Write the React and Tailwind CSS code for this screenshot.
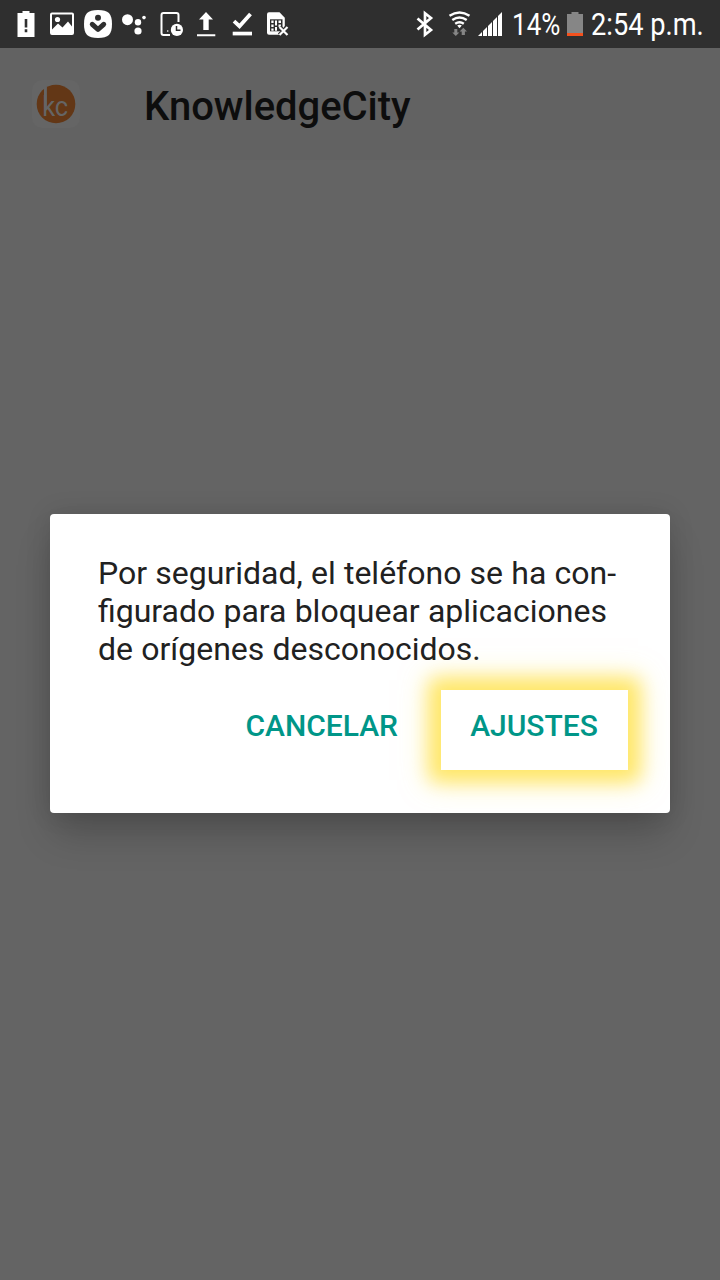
import React from 'react';

function Glyph({ x, w, children }) {
  return (
    <svg className="block h-12 shrink-0" width={w} height="48" viewBox={`${x} 0 ${w} 48`} fill="#fff">
      {children}
    </svg>
  );
}

function StatusBar() {
  return (
    <div className="flex h-12 w-full items-center bg-[#2f2f2f] pl-4 text-white">
      <div className="flex w-[398px] shrink-0">
        <Glyph x={16} w={32}>
          <path fillRule="evenodd" d="M17.5 13h5v-2h7v2h5v24h-17zM24.7 19v8.500h2.600v-8.500zM24.700 29.300v3h2.600v-3z" />
        </Glyph>
        <Glyph x={48} w={34}>
          <path fillRule="evenodd" d="M52 12.500h20a2 2 0 0 1 2 2v18.500a2 2 0 0 1-2 2H52a2 2 0 0 1-2-2V14.500a2 2 0 0 1 2-2zM52 14.500v15l6-6 4.500 4 5.500-6 4 5v-12z" />
          <circle cx="57.500" cy="19.500" r="2.600" />
        </Glyph>
        <Glyph x={82} w={36}>
          <path d="M98 10c10.500 0 14 3.500 14 14s-3.500 14-14 14-14-3.500-14-14 3.500-14 14-14z" />
          <circle cx="98" cy="17.800" r="3" fill="#2f2f2f" />
          <path d="M92.300 24.300L98 29.500L103.700 24.300" fill="none" stroke="#2f2f2f" strokeWidth="5" strokeLinecap="round" strokeLinejoin="round" />
        </Glyph>
        <Glyph x={118} w={38}>
          <circle cx="127.500" cy="19.700" r="5.500" />
          <circle cx="138" cy="22.300" r="3.200" />
          <circle cx="138" cy="31" r="3.600" />
          <circle cx="144" cy="17.600" r="1.800" />
        </Glyph>
        <Glyph x={156} w={34}>
          <path d="M178.500 22V15a2 2 0 0 0-2-2h-13a2 2 0 0 0-2 2v18a2 2 0 0 0 2 2h6.500" fill="none" stroke="#fff" strokeWidth="2" />
          <circle cx="167.700" cy="31" r=".8" />
          <circle cx="176.900" cy="29.900" r="6.100" />
          <path d="M176.500 26v4.300h4" fill="none" stroke="#2f2f2f" strokeWidth="1.500" />
        </Glyph>
        <Glyph x={190} w={36}>
          <path d="M206 12l7 7.500h-4.300V30h-5.400V19.500H199zM197 34.300h18.300v2H197z" />
        </Glyph>
        <Glyph x={226} w={36}>
          <path d="M234 21.200l5.500 5L250.500 14" fill="none" stroke="#fff" strokeWidth="3.800" />
          <path d="M232.700 31.700h19.300v3.700h-19.300z" />
        </Glyph>
        <Glyph x={262} w={32}>
          <path d="M269 12.300h10.500l5.300 5.500V26l-5 7.500-1 1.200H269a2 2 0 0 1-2-2V14.300a2 2 0 0 1 2-2z" />
          <path d="M270 19.300h12.500v12H270z" fill="#2f2f2f" />
          <path d="M271.300 20.500h2.300v2.500h-2.300zM271.300 24.500h2.300v2.500h-2.300zM271.300 28.500h2.300v2.300h-2.300zM275 20.500h2v5h-2zM275 27h2v3.800h-2zM278.500 20.500h2.500v2.500h-2.500zM278.500 24.500h2.500v2.500h-2.500z" />
          <path d="M279.500 27l8 8M287.500 27l-8 8" fill="none" stroke="#2f2f2f" strokeWidth="4.500" />
          <path d="M279.500 27l8 8M287.500 27l-8 8" fill="none" stroke="#fff" strokeWidth="2.200" />
        </Glyph>
      </div>
      <Glyph x={414} w={32}>
        <path d="M417.500 18.500L431 30l-6 4.800V13.200l6 4.800L417.500 29.500" fill="none" stroke="#fff" strokeWidth="2.700" />
      </Glyph>
      <Glyph x={446} w={30}>
        <g fill="none" stroke="#fff" strokeWidth="2.400">
          <path d="M449.500 15.800q10-6.600 20 0" />
          <path d="M452.300 20q7.200-5 14.400 0" />
          <path d="M455.200 23.800q4.300-3 8.600 0" />
        </g>
        <path d="M457.200 25.500q2.300-1.500 4.600 0l-2.300 2.700z" />
        <path d="M454.300 29h3v3.500h2l-3.500 3.500-3.500-3.500h2zM461.700 35h3.200v-3.500h2.100l-3.700-3.700-3.700 3.700h2.100z" fill="#858585" />
      </Glyph>
      <Glyph x={476} w={36}>
        <path d="M478 36l4-4v4zM483 31l4-4v9h-4zM488 26l4-4v14h-4zM493 21l4-4v19h-4zM498 16l4-4v24h-4z" />
      </Glyph>
      <span className="w-[54px] origin-left scale-x-[0.84] whitespace-nowrap pt-px text-[31px] leading-[47px]">14%</span>
      <Glyph x={566} w={25}>
        <path d="M567 14h4.500v-2h7v2h4.500v22h-16z" fill="#868686" />
        <path d="M567 33h16v3h-16z" fill="#f4511e" />
      </Glyph>
      <span className="origin-left scale-x-[0.878] whitespace-nowrap pt-px text-[31px] leading-[47px]">2:54 p.m.</span>
    </div>
  );
}

function Logo() {
  return (
    <svg className="block size-12" viewBox="0 0 48 48">
      <rect width="48" height="48" rx="10" fill="#656565" />
      <circle cx="24" cy="24" r="19.300" fill="#633716" />
      <path d="M12 7h2.900v20H12z" fill="#656565" />
      <text className="font-['Roboto',sans-serif]" x="10.200" y="36" fontSize="28" fill="#656565" textLength="26" lengthAdjust="spacingAndGlyphs">
        kc
      </text>
    </svg>
  );
}

export default function App() {
  return (
    <div className="flex h-[1280px] w-[720px] flex-col overflow-hidden bg-[#646464] font-['Roboto',sans-serif]">
      <StatusBar />
      <header className="flex h-28 shrink-0 items-center bg-[#626262] pl-8">
        <Logo />
        <h1 className="ml-16 pt-[5px] text-[40px] font-medium leading-[49px] tracking-[-0.04px] text-[#0d0d0d]">KnowledgeCity</h1>
      </header>
      <main className="flex flex-col items-center pt-[354px]">
        <section className="flex h-[299px] w-[620px] flex-col rounded bg-white shadow-[0_24px_36px_-4px_rgba(0,0,0,0.2),0_0_26px_rgba(0,0,0,0.12)]">
          <p className="whitespace-nowrap pl-12 pt-10 text-[32px] leading-[38px] [word-spacing:0.25px] text-[#212121]">
            Por seguridad, el teléfono se ha con-
            <br />
            figurado para bloquear aplicaciones
            <br />
            de orígenes desconocidos.
          </p>
          <div className="mt-[22px] flex justify-end pr-[42px] text-[30px] font-medium leading-[72px] text-[#009688]">
            <button className="mr-[43px] h-20 pb-2">CANCELAR</button>
            <button className="h-20 w-[187px] bg-white pb-2 pr-px shadow-[0_0_18px_11px_#ffe76a,0_0_28px_10px_#ffe76a80]">AJUSTES</button>
          </div>
        </section>
      </main>
    </div>
  );
}
